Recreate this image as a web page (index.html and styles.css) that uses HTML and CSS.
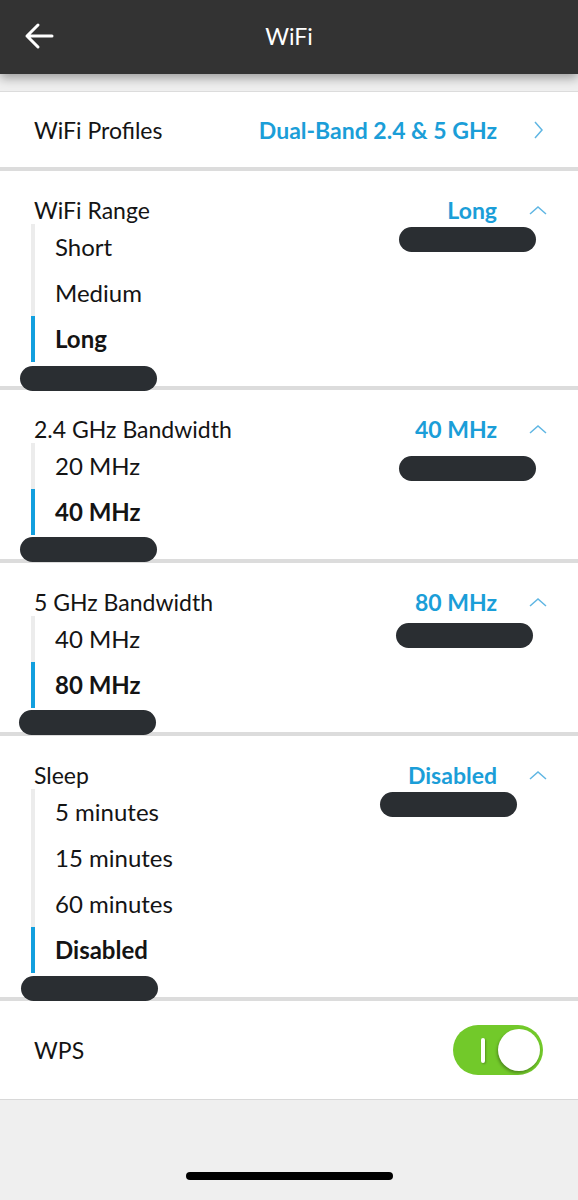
FILE: index.html
```html
<!DOCTYPE html>
<html lang="en">
<head>
    <meta charset="UTF-8">
    <meta name="viewport" content="width=device-width, initial-scale=1.0">
    <title>WiFi</title>
    <link rel="stylesheet" href="styles.css">
</head>
<body>

    <!-- Top bar -->
    <div class="topbar">
        <svg class="back" width="30" height="28" viewBox="0 0 30 28">
            <path d="M28 14H3M14 3L3 14l11 11" fill="none" stroke="#fff" stroke-width="3" stroke-linecap="round" stroke-linejoin="round"/>
        </svg>
        <div class="title">WiFi</div>
    </div>

    <div class="content">
        <!-- Profiles -->
        <div class="row profiles">
            <span class="label">WiFi Profiles</span>
            <span class="value">Dual-Band 2.4 &amp; 5 GHz</span>
            <svg class="chev" width="18" height="18" viewBox="0 0 18 18">
                <path d="M6 1l7 8-7 8" fill="none" stroke="#5fb6e3" stroke-width="1.5"/>
            </svg>
        </div>

        <!-- WiFi Range -->
        <div class="section">
            <div class="head">
                <span class="label">WiFi Range</span>
                <span class="value">Long</span>
                <svg class="chev" width="18" height="18" viewBox="0 0 18 18">
                    <path d="M1 13l8-7 8 7" fill="none" stroke="#5fb6e3" stroke-width="1.5"/>
                </svg>
            </div>
            <ul class="options">
                <li>Short</li>
                <li>Medium</li>
                <li class="selected">Long</li>
            </ul>
            <div class="redact redact-right" style="top:56px"></div>
            <div class="redact redact-left" style="top:195px"></div>
        </div>

        <!-- 2.4 GHz -->
        <div class="section">
            <div class="head">
                <span class="label">2.4 GHz Bandwidth</span>
                <span class="value">40 MHz</span>
                <svg class="chev" width="18" height="18" viewBox="0 0 18 18">
                    <path d="M1 13l8-7 8 7" fill="none" stroke="#5fb6e3" stroke-width="1.5"/>
                </svg>
            </div>
            <ul class="options">
                <li>20 MHz</li>
                <li class="selected">40 MHz</li>
            </ul>
            <div class="redact redact-right" style="top:66px"></div>
            <div class="redact redact-left" style="top:147px"></div>
        </div>

        <!-- 5 GHz -->
        <div class="section">
            <div class="head">
                <span class="label">5 GHz Bandwidth</span>
                <span class="value">80 MHz</span>
                <svg class="chev" width="18" height="18" viewBox="0 0 18 18">
                    <path d="M1 13l8-7 8 7" fill="none" stroke="#5fb6e3" stroke-width="1.5"/>
                </svg>
            </div>
            <ul class="options">
                <li>40 MHz</li>
                <li class="selected">80 MHz</li>
            </ul>
            <div class="redact redact-right" style="top:60px; right:45px"></div>
            <div class="redact redact-left" style="top:147px; left:19px"></div>
        </div>

        <!-- Sleep -->
        <div class="section">
            <div class="head">
                <span class="label">Sleep</span>
                <span class="value">Disabled</span>
                <svg class="chev" width="18" height="18" viewBox="0 0 18 18">
                    <path d="M1 13l8-7 8 7" fill="none" stroke="#5fb6e3" stroke-width="1.5"/>
                </svg>
            </div>
            <ul class="options">
                <li>5 minutes</li>
                <li>15 minutes</li>
                <li>60 minutes</li>
                <li class="selected">Disabled</li>
            </ul>
            <div class="redact redact-right" style="top:56px; right:61px"></div>
            <div class="redact redact-left" style="top:240px; left:21px"></div>
        </div>

        <!-- WPS -->
        <div class="row wps">
            <span class="label">WPS</span>
            <div class="toggle">
                <span class="toggle-bar"></span>
                <span class="knob"></span>
            </div>
        </div>
    </div>

    <div class="home-bar"></div>

</body>
</html>
```

FILE: styles.css
```css
body {
    margin: 0;
    background-color: #efefef;
    font-family: Lato, "Open Sans", sans-serif;
    color: #141414;
    height: 1200px;
    position: relative;
    overflow: hidden;
}
.topbar {
    height: 74px;
    background-color: #333333;
    position: relative;
    display: flex;
    align-items: center;
    justify-content: center;
    box-shadow: 0 4px 10px rgba(0, 0, 0, 0.35);
    z-index: 2;
}
.back {
    position: absolute;
    left: 24px;
    top: 22px;
}
.title {
    color: #fff;
    font-size: 23px;
    margin-top: -2px;
}
.content {
    margin-top: 17px;
    border-top: 1px solid #dcdcdc;
}
.row {
    background-color: #fff;
    display: flex;
    align-items: center;
    padding: 0 31px 0 34px;
}
.label {
    font-size: 23px;
    flex: 1;
}
.value {
    color: #1b9ed8;
    font-size: 23px;
    font-weight: bold;
    margin-right: 32px;
}
.profiles {
    height: 75px;
    border-bottom: 4px solid #dcdcdc;
}
.section {
    background-color: #fff;
    position: relative;
    padding: 24px 31px 24px 34px;
    border-bottom: 4px solid #dcdcdc;
}
.head {
    display: flex;
    align-items: center;
    height: 29px;
}
.options {
    list-style: none;
    margin: 0 0 0 -3px;
    padding: 0;
}
.options li {
    height: 46px;
    line-height: 46px;
    font-size: 24px;
    border-left: 4px solid #ececec;
    padding-left: 20px;
}
.options li.selected {
    border-left-color: #129fde;
    font-weight: bold;
}
.redact {
    position: absolute;
    width: 137px;
    height: 25px;
    border-radius: 13px;
    background-color: #2a2e32;
    z-index: 1;
}
.redact-right {
    right: 42px;
}
.redact-left {
    left: 20px;
}
.wps {
    height: 98px;
    border-bottom: 1px solid #d8d8d8;
}
.toggle {
    width: 90px;
    height: 50px;
    border-radius: 25px;
    background-color: #72c92a;
    position: relative;
    margin-right: 4px;
}
.toggle-bar {
    position: absolute;
    left: 28px;
    top: 13px;
    width: 4px;
    height: 25px;
    border-radius: 2px;
    background-color: #fff;
    box-shadow: 1px 1px 2px rgba(0, 0, 0, 0.25);
}
.knob {
    position: absolute;
    right: 3px;
    top: 4px;
    width: 42px;
    height: 42px;
    border-radius: 50%;
    background-color: #fff;
    box-shadow: -1px 2px 3px rgba(0, 0, 0, 0.3);
}
.home-bar {
    position: absolute;
    left: 186px;
    top: 1172px;
    width: 207px;
    height: 8px;
    border-radius: 4px;
    background-color: #000;
}
```
